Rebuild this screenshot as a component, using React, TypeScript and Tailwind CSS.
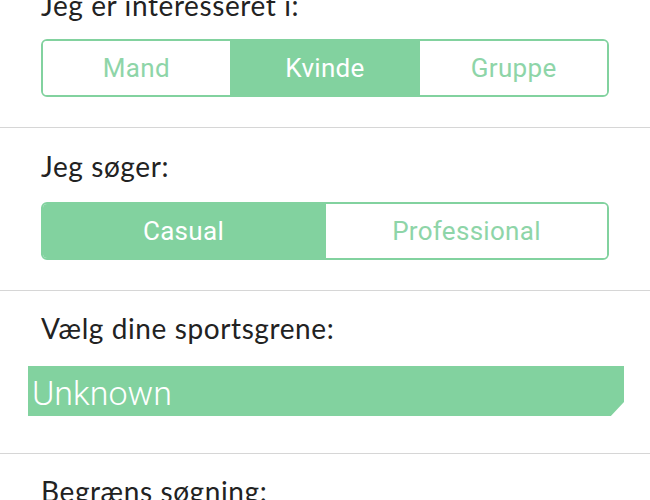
import { useState } from 'react'

// --- Segmented control -------------------------------------------------------

interface SegmentedProps {
  options: string[]
  value: string
  onChange: (v: string) => void
}

function Segmented({ options, value, onChange }: SegmentedProps) {
  return (
    <div className="flex h-[58px] overflow-hidden rounded-[6px] border-2 border-[#82d29f]">
      {options.map((opt, i) => {
        const active = opt === value
        return (
          <button
            key={opt}
            onClick={() => onChange(opt)}
            className={`flex-1 font-['Roboto',sans-serif] text-[26px] tracking-[0.3px] ${
              i > 0 ? 'border-l-2 border-[#82d29f]' : ''
            } ${active ? 'bg-[#82d29f] text-white' : 'bg-white text-[#8ed5a8]'}`}
          >
            {opt}
          </button>
        )
      })}
    </div>
  )
}

// --- Section label -----------------------------------------------------------

function Label({ children, className = '' }: { children: string; className?: string }) {
  return (
    <p
      className={`h-[30px] font-['Lato',sans-serif] text-[28px] leading-[30px] tracking-[0.6px] text-[#222] ${className}`}
    >
      {children}
    </p>
  )
}

// --- Page --------------------------------------------------------------------

export default function App() {
  const [gender, setGender] = useState('Kvinde')
  const [level, setLevel] = useState('Casual')

  return (
    <div className="h-[500px] w-[650px] overflow-hidden bg-white">
      <section className="border-b border-[#d6d6d6] px-[41px] pb-[30px]">
        <Label className="mt-[-10px]">Jeg er interesseret i:</Label>
        <div className="mt-[19px]">
          <Segmented options={['Mand', 'Kvinde', 'Gruppe']} value={gender} onChange={setGender} />
        </div>
      </section>

      <section className="border-b border-[#d6d6d6] px-[41px] pt-[23px] pb-[30px]">
        <Label>Jeg søger:</Label>
        <div className="mt-[21px]">
          <Segmented options={['Casual', 'Professional']} value={level} onChange={setLevel} />
        </div>
      </section>

      <section className="border-b border-[#d6d6d6] px-[41px] pt-[22px] pb-[37px]">
        <Label>Vælg dine sportsgrene:</Label>
        {/* selected sport chip with clipped corner */}
        <div className="mt-[23px] ml-[-13px] mr-[-15px] flex h-[50px] items-center bg-[#82d29f] pt-[5px] pl-[4px] [clip-path:polygon(0_0,100%_0,100%_72%,97.8%_100%,0_100%)]">
          <span className="font-['Roboto',sans-serif] text-[34px] font-light text-white">Unknown</span>
        </div>
      </section>

      <section className="px-[41px] pt-[22px]">
        <Label>Begræns søgning:</Label>
      </section>
    </div>
  )
}
